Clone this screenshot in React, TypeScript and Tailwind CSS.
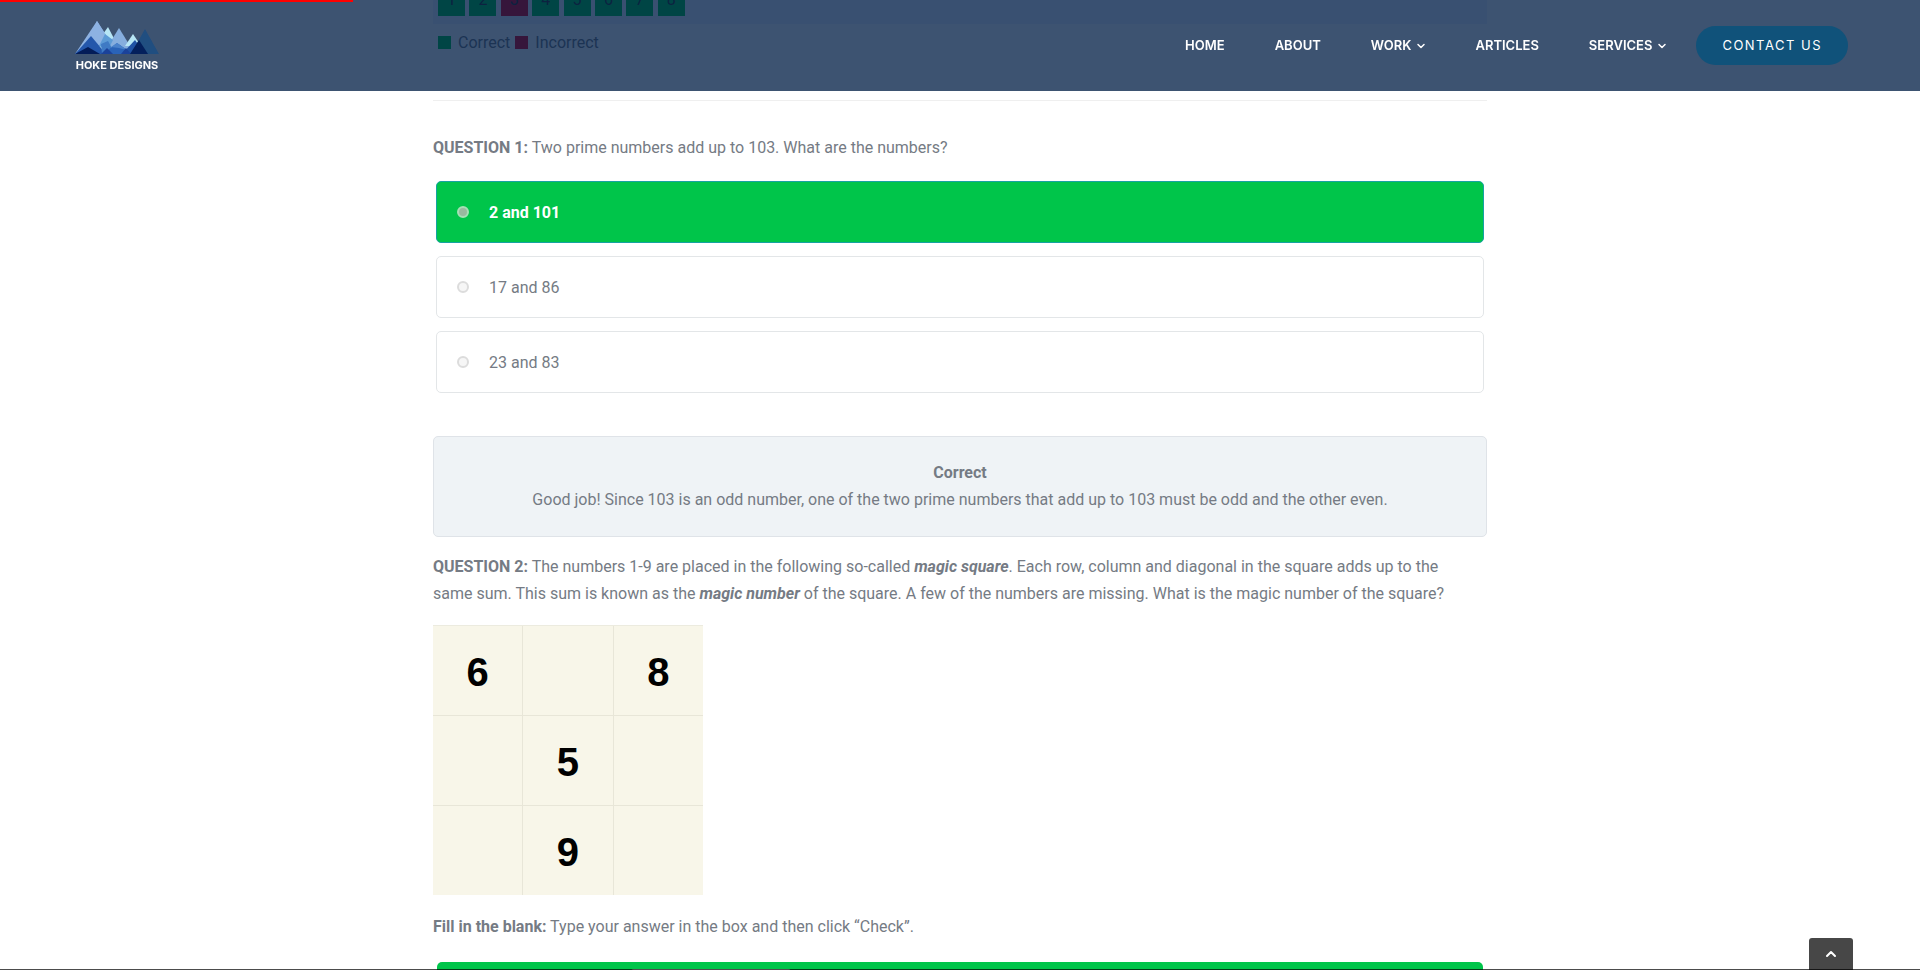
import { useState } from 'react';
import { ChevronDown, ChevronUp } from 'lucide-react';
import { clsx } from 'clsx';

const navItems = [
  { label: 'HOME' },
  { label: 'ABOUT' },
  { label: 'WORK', hasMenu: true },
  { label: 'ARTICLES' },
  { label: 'SERVICES', hasMenu: true },
];

const results = [true, true, false, true, true, true, true, true];

const options = ['2 and 101', '17 and 86', '23 and 83'];

const magicSquare = ['6', '', '8', '', '5', '', '', '9', ''];

function Logo() {
  return (
    <a href="#" className="flex w-[86px] flex-col items-center" aria-label="Hoke Designs">
      <svg viewBox="0 0 84 35" className="h-[35px] w-[84px]" aria-hidden="true">
        {/* back row */}
        <path d="M22 1 L43 34 H0 Z" fill="#8db2e2" />
        <path d="M33 7 L45 30 L22 30 L28 14 Z" fill="#b7e6f5" />
        <path d="M22 1 L31 15 L26 26 H10 Z" fill="#8db2e2" />
        <path d="M44 8 L60 34 H28 Z" fill="#86aede" />
        <path d="M58 14 L66 26 H50 Z" fill="#b7e6f5" />
        {/* overlaps */}
        <path d="M30 14 L38 20 L33 30 L24 26 Z" fill="#5d9bd6" />
        <path d="M16 16 L31 34 H0 Z" fill="#2457ab" />
        <path d="M26 24 L33 21 L40 34 H27 Z" fill="#3f7ac4" />
        <path d="M42 23 L58 34 H28 Z" fill="#2a63b8" />
        <path d="M42 23 L52 30 L44 28 L36 27 Z" fill="#4a82cb" />
        <path d="M60 20 L70 34 H47 Z" fill="#1f52a5" />
        <path d="M32 28 L38 34 H26 Z" fill="#1b429a" />
        <path d="M51 28 L56 34 H46 Z" fill="#1b429a" />
        {/* front row */}
        <path d="M70 9 L84 34 H56 Z" fill="#204e80" />
        <path d="M64 20 L73 34 H55 Z" fill="#04205c" />
        <path d="M13 27 L25 34 H0 Z" fill="#031c58" />
      </svg>
      <span className="mt-1 font-['Inter'] text-[11px] leading-3 font-bold whitespace-nowrap text-white">
        HOKE DESIGNS
      </span>
    </a>
  );
}

function Header() {
  return (
    <header className="fixed inset-x-0 top-0 z-20 flex h-[91px] items-center justify-between bg-[rgba(0,29,68,0.76)] pr-[72px] pl-[74px]">
      <div className="absolute top-0 left-0 h-[2px] w-[18.4%] bg-[#ff0000]" />
      <Logo />
      <nav className="flex items-center">
        <ul className="mr-[30px] flex items-center gap-[50px] font-['Inter'] text-[13px] font-semibold text-white">
          {navItems.map((item) => (
            <li key={item.label}>
              <a href="#" className="flex items-center gap-1">
                {item.label}
                {item.hasMenu && <ChevronDown className="-mr-0.5 h-3 w-3" strokeWidth={3} />}
              </a>
            </li>
          ))}
        </ul>
        <button className="h-[39px] rounded-full bg-[#10527a] px-[26px] font-['Inter'] text-[13px] tracking-[1.5px] text-white">
          CONTACT US
        </button>
      </nav>
    </header>
  );
}

function Overview() {
  return (
    <section>
      <div className="-mt-5 bg-[#eef2ff] pt-2 pb-2 pl-[5px]">
        <ol className="grid w-[251px] grid-cols-8">
          {results.map((correct, i) => (
            <li
              key={i}
              className={clsx(
                'h-7 w-[27px] text-center leading-6 text-[#333]',
                correct ? 'bg-[#00c54a]' : 'bg-[#e00020]'
              )}
            >
              {i + 1}
            </li>
          ))}
        </ol>
      </div>
      <div className="flex items-center pt-[5px] pl-[5px]">
        <span className="mr-[7px] h-[13px] w-[13px] bg-[#00c54a]" />
        Correct
        <span className="mr-[7px] ml-[5px] h-[13px] w-[13px] bg-[#e00020]" />
        Incorrect
      </div>
    </section>
  );
}

function QuestionOne() {
  const [selected, setSelected] = useState(0);

  return (
    <section>
      <p>
        <strong>QUESTION 1:</strong> Two prime numbers add up to 103. What are the numbers?
      </p>
      <div className="mx-[3px] mt-5 flex flex-col gap-[13px]">
        {options.map((option, i) => (
          <label
            key={option}
            className={clsx(
              'flex h-[62px] items-center rounded-[5px] border pl-5',
              i === selected
                ? 'border-[#17a2a2] bg-[#00c54a] font-bold text-white'
                : 'border-[#e3e6e8] bg-white'
            )}
          >
            <input
              type="radio"
              name="question-1"
              checked={i === selected}
              onChange={() => setSelected(i)}
              className={clsx(
                'mr-5 h-3 w-3 appearance-none rounded-full border-2',
                i === selected ? 'border-[#a6dfb5] bg-[#98b99f]' : 'border-[#dcdcdc] bg-[#f6f6f6]'
              )}
            />
            {option}
          </label>
        ))}
      </div>
      <div className="mt-[43px] rounded-[5px] border border-[#dfe3e8] bg-[#eff3f6] pt-[22px] pb-[23px] text-center">
        <strong className="block">Correct</strong>
        Good job! Since 103 is an odd number, one of the two prime numbers that add up to 103 must be odd and the other even.
      </div>
    </section>
  );
}

function QuestionTwo() {
  return (
    <section className="mt-4">
      <p className="pr-6">
        <strong>QUESTION 2:</strong> The numbers 1-9 are placed in the following so-called{' '}
        <strong>
          <em>magic square</em>
        </strong>
        . Each row, column and diagonal in the square adds up to the same sum. This sum is known as the{' '}
        <strong>
          <em>magic number</em>
        </strong>{' '}
        of the square. A few of the numbers are missing. What is the magic number of the square?
      </p>
      <div className="mt-[18px] grid h-[270px] w-[270px] grid-cols-3 grid-rows-3 gap-px border-t border-[#ecebdf] bg-[#e8e6d8] font-['Liberation_Sans'] text-[40px] font-bold text-black">
        {magicSquare.map((value, i) => (
          <div key={i} className="flex items-center justify-center bg-[#f8f6e9] pt-[3px]">
            {value}
          </div>
        ))}
      </div>
      <p className="mt-[18px]">
        <strong>Fill in the blank:</strong> Type your answer in the box and then click “Check”.
      </p>
      <div className="mx-1 mt-[22px] h-[62px] rounded-[5px] bg-[#00c54a] pt-[7px] pl-[194px]">
        <input
          type="text"
          aria-label="Magic number"
          className="block h-12 w-40 rounded-[3px] bg-white px-2"
        />
      </div>
    </section>
  );
}

export default function App() {
  return (
    <div className="h-screen overflow-hidden bg-white font-['Roboto',sans-serif] text-base leading-[27px] text-[#757b84]">
      <Header />
      <main className="mx-auto w-full max-w-[1054px]">
        <Overview />
        <hr className="mt-11 mb-[33px] border-[#efefef]" />
        <QuestionOne />
        <QuestionTwo />
      </main>
      <button
        aria-label="Back to top"
        className="fixed right-[67px] bottom-0 z-10 flex h-8 w-11 items-center justify-center rounded-t-[3px] bg-[#474747] text-white"
      >
        <ChevronUp className="h-4 w-4" strokeWidth={3} />
      </button>
      <div className="fixed inset-x-0 bottom-0 z-10 h-px bg-black/70" />
    </div>
  );
}
